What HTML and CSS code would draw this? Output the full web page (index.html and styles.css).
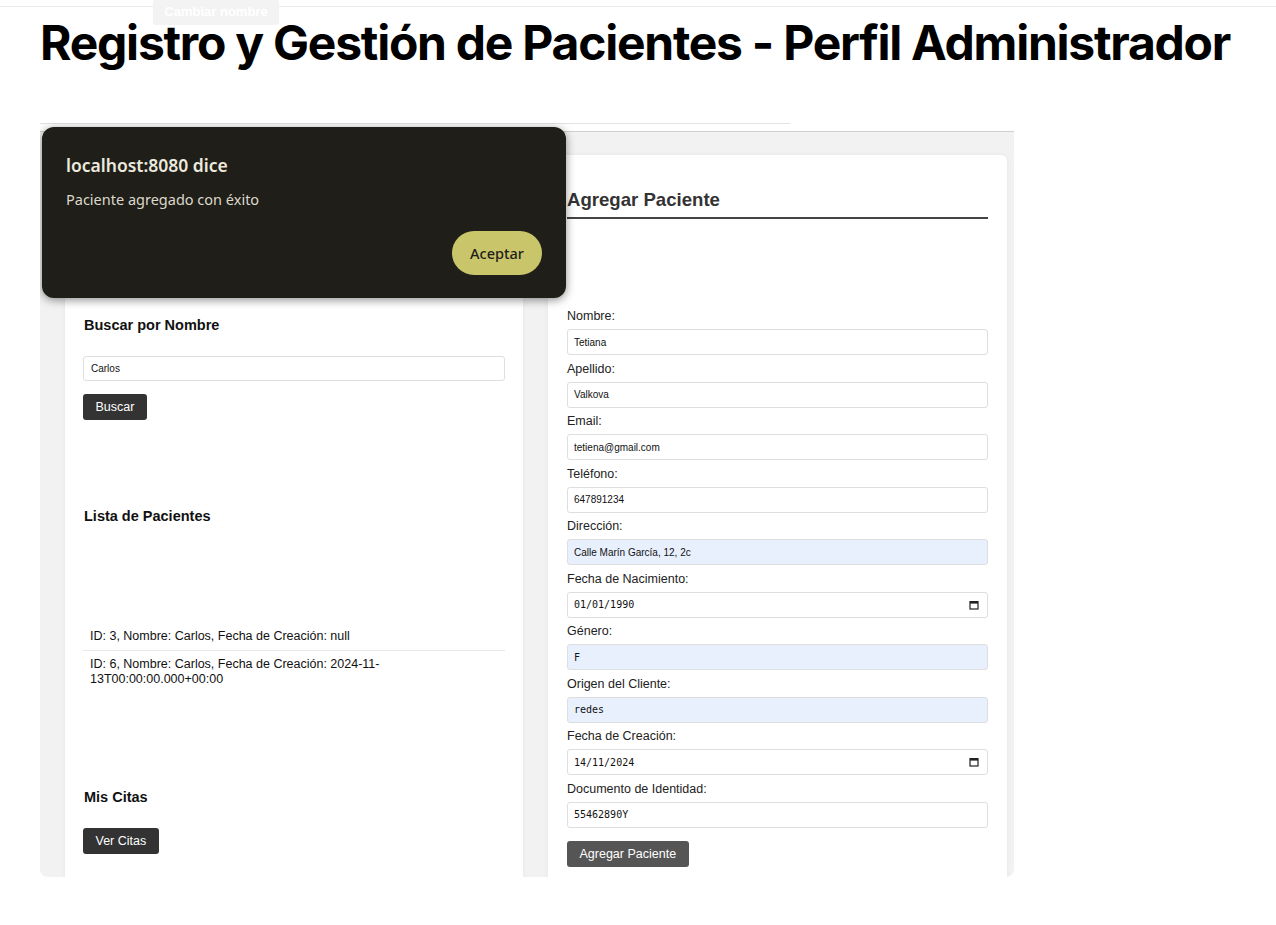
FILE: index.html
```html
<!DOCTYPE html>
<html lang="es">
<head>
<meta charset="utf-8">
<title>Registro y Gestión de Pacientes</title>
<link rel="stylesheet" href="styles.css">
</head>
<body>
<div class="topline"></div>
<span class="rename-chip">Cambiar nombre</span>
<h1 class="page-title">Registro y Gestión de Pacientes - Perfil Administrador</h1>

<div class="shot">
  <div class="shot-chrome"></div>
  <div class="shot-body">
    <section class="card card-left">
      <h3 class="sec-title">Buscar por Nombre</h3>
      <input class="inp inp-search" type="text" value="Carlos">
      <button class="btn btn-search">Buscar</button>

      <h3 class="sec-title sec-list">Lista de Pacientes</h3>
      <ul class="patient-list">
        <li>ID: 3, Nombre: Carlos, Fecha de Creación: null</li>
        <li>ID: 6, Nombre: Carlos, Fecha de Creación: 2024-11-13T00:00:00.000+00:00</li>
      </ul>

      <h3 class="sec-title sec-citas">Mis Citas</h3>
      <button class="btn btn-citas">Ver Citas</button>
    </section>

    <section class="card card-right">
      <h2 class="form-title">Agregar Paciente</h2>
      <form class="pform">
        <div class="field"><label>Nombre:</label><input class="inp" type="text" value="Tetiana"></div>
        <div class="field"><label>Apellido:</label><input class="inp" type="text" value="Valkova"></div>
        <div class="field"><label>Email:</label><input class="inp" type="text" value="tetiena@gmail.com"></div>
        <div class="field"><label>Teléfono:</label><input class="inp" type="text" value="647891234"></div>
        <div class="field"><label>Dirección:</label><input class="inp inp-auto" type="text" value="Calle Marín García, 12, 2c"></div>
        <div class="field"><label>Fecha de Nacimiento:</label>
          <div class="inp inp-date"><span>01/01/1990</span>
            <svg class="cal" width="10" height="10" viewBox="0 0 10 10"><rect x="1" y="1.6" width="8" height="7.4" fill="none" stroke="#222" stroke-width="1.2"/><rect x="1" y="1.6" width="8" height="2" fill="#222"/></svg>
          </div>
        </div>
        <div class="field"><label>Género:</label><input class="inp inp-auto inp-mono" type="text" value="F"></div>
        <div class="field"><label>Origen del Cliente:</label><input class="inp inp-auto inp-mono" type="text" value="redes"></div>
        <div class="field"><label>Fecha de Creación:</label>
          <div class="inp inp-date"><span>14/11/2024</span>
            <svg class="cal" width="10" height="10" viewBox="0 0 10 10"><rect x="1" y="1.6" width="8" height="7.4" fill="none" stroke="#222" stroke-width="1.2"/><rect x="1" y="1.6" width="8" height="2" fill="#222"/></svg>
          </div>
        </div>
        <div class="field"><label>Documento de Identidad:</label><input class="inp inp-mono" type="text" value="55462890Y"></div>
        <button class="btn btn-submit" type="button">Agregar Paciente</button>
      </form>
    </section>
  </div>

  <div class="alert">
    <div class="alert-title">localhost:8080 dice</div>
    <div class="alert-msg">Paciente agregado con éxito</div>
    <button class="alert-ok">Aceptar</button>
  </div>
</div>
</body>
</html>
```

FILE: styles.css
```css
* { box-sizing: border-box; }

body {
  margin: 0;
  background: #fff;
  font-family: "Liberation Sans", Arial, sans-serif;
  color: #111;
  position: relative;
}

.topline {
  height: 7px;
  border-bottom: 1px solid #e9e9e9;
}

.rename-chip {
  position: absolute;
  left: 153px;
  top: 0;
  width: 126px;
  height: 25px;
  background: #f3f3f3;
  color: #fff;
  font: 700 13px/24px "Liberation Sans", Arial, sans-serif;
  text-align: center;
  border-radius: 0 0 3px 3px;
}

.page-title {
  margin: 16px 0 0 40px;
  font: 700 48px/40px Inter, "Liberation Sans", sans-serif;
  letter-spacing: -0.026em;
  color: #000;
}

.shot {
  margin: 60px 0 0 40px;
  width: 974px;
  height: 754px;
  position: relative;
  overflow: hidden;
  border-radius: 0 0 8px 8px;
}

.shot-chrome {
  width: 750px;
  height: 8px;
  border-top: 1px solid #e2e2e2;
}

.shot-body {
  border-top: 1px solid #cfcfcf;
  background: #f2f2f2;
  display: flex;
  gap: 25px;
  padding: 23px 7px 0 25px;
  height: 760px;
}

.card {
  background: #fff;
  border-radius: 6px;
  box-shadow: 0 0 5px rgba(0, 0, 0, 0.05);
}

.card-left {
  width: 458px;
  padding: 162px 18px 0;
}

.card-right {
  width: 459px;
  padding: 34px 19px 0;
}

.sec-title {
  margin: 0;
  padding-left: 1px;
  font: 700 14.5px/17px "Liberation Sans", Arial, sans-serif;
  color: #111;
}

.inp {
  display: block;
  width: 100%;
  height: 26px;
  padding: 0 6px;
  border: 1px solid #dedede;
  border-radius: 3px;
  background: #fff;
  font: 10px "Liberation Sans", Arial, sans-serif;
  color: #111;
  outline: none;
}

.inp-search {
  margin-top: 22px;
  height: 25px;
  padding: 0 7px;
}

.btn {
  display: block;
  height: 26px;
  padding: 0 12.5px;
  border: 0;
  border-radius: 3px;
  background: #333;
  color: #fff;
  font: 12.5px "Liberation Sans", Arial, sans-serif;
}

.btn-search { margin-top: 13px; }

.sec-list { margin-top: 88px; }

.patient-list {
  list-style: none;
  margin: 98px 0 0;
  padding: 0;
}

.patient-list li {
  padding: 6px 7px;
  font-size: 12.5px;
  line-height: 15px;
  color: #111;
  border-bottom: 1px solid #e8e8e8;
}

.patient-list li:last-child { border-bottom: 0; }

.sec-citas { margin-top: 96px; }

.btn-citas { margin-top: 22px; }

.form-title {
  margin: 0;
  padding-bottom: 6px;
  border-bottom: 2px solid #444;
  font: 700 18.6px/22px "Liberation Sans", Arial, sans-serif;
  color: #333;
}

.pform { margin-top: 89px; }

.field label {
  display: block;
  font: 12.5px/16px "Liberation Sans", Arial, sans-serif;
  color: #222;
}

.field .inp {
  margin: 5px 0 5.5px;
}

.inp-auto { background: #e8f0fe; }

.inp-mono {
  font-family: "DejaVu Sans Mono", monospace;
  font-size: 10px;
  padding-left: 6px;
}

.inp-date {
  display: flex;
  align-items: center;
  justify-content: space-between;
  padding: 0 8px 0 6px;
  font-family: "DejaVu Sans Mono", monospace;
  font-size: 10px;
}

.btn-submit {
  margin-top: 13px;
  background: #555;
}

.alert {
  position: absolute;
  left: 2px;
  top: 4px;
  width: 524px;
  height: 171px;
  padding: 27px 24px 23px;
  background: #1f1e18;
  border-radius: 12px;
  box-shadow: 0 2px 10px rgba(0, 0, 0, 0.45);
  display: flex;
  flex-direction: column;
  font-family: "Noto Sans", "Open Sans", sans-serif;
}

.alert-title {
  font-size: 17.5px;
  line-height: 22px;
  font-weight: 600;
  color: #ece9de;
}

.alert-msg {
  margin-top: 13px;
  font-size: 14.5px;
  line-height: 20px;
  color: #dcd9cc;
}

.alert-ok {
  margin-top: auto;
  align-self: flex-end;
  width: 90px;
  height: 44px;
  border: 0;
  border-radius: 22px;
  background: #c9c56b;
  color: #1f1e18;
  font: 500 14.5px "Noto Sans", "Open Sans", sans-serif;
}
```
